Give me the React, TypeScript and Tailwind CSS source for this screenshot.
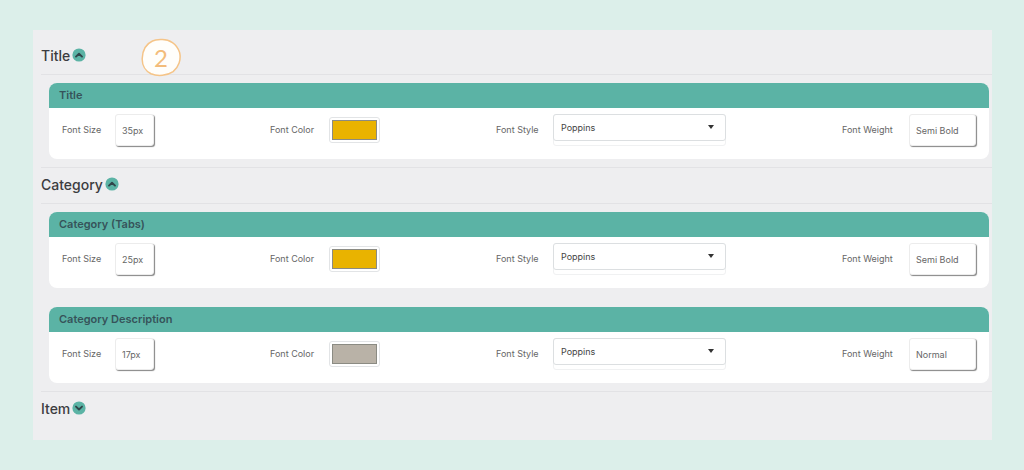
import { useId, useState } from "react";

type Group = {
  name: string;
  size: string;
  color: string;
  style: string;
  weight: string;
};

type Section = {
  name: string;
  open: boolean;
  groups: Group[];
};

const sections: Section[] = [
  {
    name: "Title",
    open: true,
    groups: [
      { name: "Title", size: "35px", color: "#e9b300", style: "Poppins", weight: "Semi Bold" },
    ],
  },
  {
    name: "Category",
    open: true,
    groups: [
      { name: "Category (Tabs)", size: "25px", color: "#e9b300", style: "Poppins", weight: "Semi Bold" },
      { name: "Category Description", size: "17px", color: "#b9b2a7", style: "Poppins", weight: "Normal" },
    ],
  },
  { name: "Item", open: false, groups: [] },
];

const boxClass =
  "h-8 rounded-[3px] border border-[#ececec] bg-white px-1.5 text-[9px] text-[#666] shadow-[1px_1px_1px_#858585] outline-none";

function Chevron({ open }: { open: boolean }) {
  return (
    <svg viewBox="0 0 14 14" className="size-3.5" aria-hidden="true">
      <circle cx="7" cy="7" r="6.6" fill="#5bb3a5" />
      <path
        d={open ? "M4 8.6 7 5.7l3 2.9" : "M4 5.6 7 8.5l3-2.9"}
        fill="none"
        stroke="#30454a"
        strokeWidth="1.9"
        strokeLinecap="round"
        strokeLinejoin="round"
      />
    </svg>
  );
}

function StepBadge() {
  return (
    <div className="absolute top-2 left-[108px] flex size-10 items-center justify-center">
      <svg viewBox="0 0 40 40" className="absolute inset-0 size-10" aria-hidden="true">
        <path
          d="M19.5 1.6C28.5.8 36 6.2 38.6 14.5c1.7 7-.9 14.8-6.5 19.2-5.700 4-15.400 4.900-22.100 2.100C4.500 33.200 1 27.300 1.200 20.600 1.500 12 5.700 5.600 11.500 3c2.500-1 5.300-1.200 8-1.400Z"
          fill="#fffefb"
          stroke="#f5c488"
          strokeWidth="1.5"
        />
      </svg>
      <span className="relative font-['Lato',sans-serif] text-[24px] leading-6 text-[#f3bc7a]">2</span>
    </div>
  );
}

function GroupCard({ group }: { group: Group }) {
  const id = useId();
  const [size, setSize] = useState(group.size);
  const [color, setColor] = useState(group.color);
  const [style, setStyle] = useState(group.style);
  const [weight, setWeight] = useState(group.weight);

  return (
    <div className="overflow-hidden rounded-lg bg-white">
      <h3 className="h-[25px] bg-[#5bb3a5] px-2.5 text-[11px] leading-[25px] font-semibold text-[#36535a]">
        {group.name}
      </h3>

      <div className="grid h-[51px] grid-cols-[208fr_226fr_346fr_147fr] items-start pt-1.5 pl-[13px] text-[9px] text-[#666]">
        <div className="flex items-center">
          <label htmlFor={`${id}-size`} className="w-[53px] leading-8">
            Font Size
          </label>
          <input
            id={`${id}-size`}
            type="text"
            value={size}
            onChange={(e) => setSize(e.target.value)}
            className={`${boxClass} w-[39px]`}
          />
        </div>

        <div className="flex items-center">
          <label htmlFor={`${id}-color`} className="w-[59px] leading-8">
            Font Color
          </label>
          <input
            id={`${id}-color`}
            type="color"
            value={color}
            onChange={(e) => setColor(e.target.value)}
            className="h-[26px] w-[51px] rounded-[3px] border border-[#e2e4e6] bg-white p-0.5 [&::-webkit-color-swatch]:border [&::-webkit-color-swatch]:border-[#8b8b83] [&::-webkit-color-swatch-wrapper]:p-0"
          />
        </div>

        <div className="flex items-center">
          <label htmlFor={`${id}-style`} className="w-[57px] leading-8">
            Font Style
          </label>
          <div className="h-8 w-[173px] rounded-[3px] border border-[#f0f1f2]">
            <div className="relative -m-px">
              <select
                id={`${id}-style`}
                value={style}
                onChange={(e) => setStyle(e.target.value)}
                className="block h-[27px] w-full appearance-none rounded-[3px] border border-[#dcdfe1] bg-white px-[7px] text-[9px] text-[#444] outline-none"
              >
                <option>Poppins</option>
              </select>
              <svg
                viewBox="0 0 6 4"
                className="pointer-events-none absolute top-[11px] right-3 h-1 w-1.5"
                aria-hidden="true"
              >
                <path d="M0 0h6L3 4Z" fill="#333" />
              </svg>
            </div>
          </div>
        </div>

        <div className="flex items-center">
          <label htmlFor={`${id}-weight`} className="w-[67px] leading-8">
            Font Weight
          </label>
          <input
            id={`${id}-weight`}
            type="text"
            value={weight}
            onChange={(e) => setWeight(e.target.value)}
            className={`${boxClass} w-[67px]`}
          />
        </div>
      </div>
    </div>
  );
}

function SettingsSection({ section }: { section: Section }) {
  const [open, setOpen] = useState(section.open);

  return (
    <section>
      <h2>
        <button
          type="button"
          aria-expanded={open}
          onClick={() => setOpen(!open)}
          className="flex h-8 items-center gap-0.5 text-[14px] font-medium text-[#3c3c40]"
        >
          {section.name}
          <Chevron open={open} />
        </button>
      </h2>

      {open && (
        <div className="mt-[3px] border-y border-[#e2e2e5] py-2 pr-[3px] pl-2">
          <div className="space-y-[19px]">
            {section.groups.map((group) => (
              <GroupCard key={group.name} group={group} />
            ))}
          </div>
        </div>
      )}
    </section>
  );
}

export default function App() {
  return (
    <main className="min-h-screen bg-[#dcefea] px-8 pt-[30px] pb-[30px] font-['Inter',sans-serif]">
      <div className="relative ml-px bg-[#eeeef0] pt-[9px] pb-4 pl-2">
        {sections.map((section) => (
          <SettingsSection key={section.name} section={section} />
        ))}
        <StepBadge />
      </div>
    </main>
  );
}
